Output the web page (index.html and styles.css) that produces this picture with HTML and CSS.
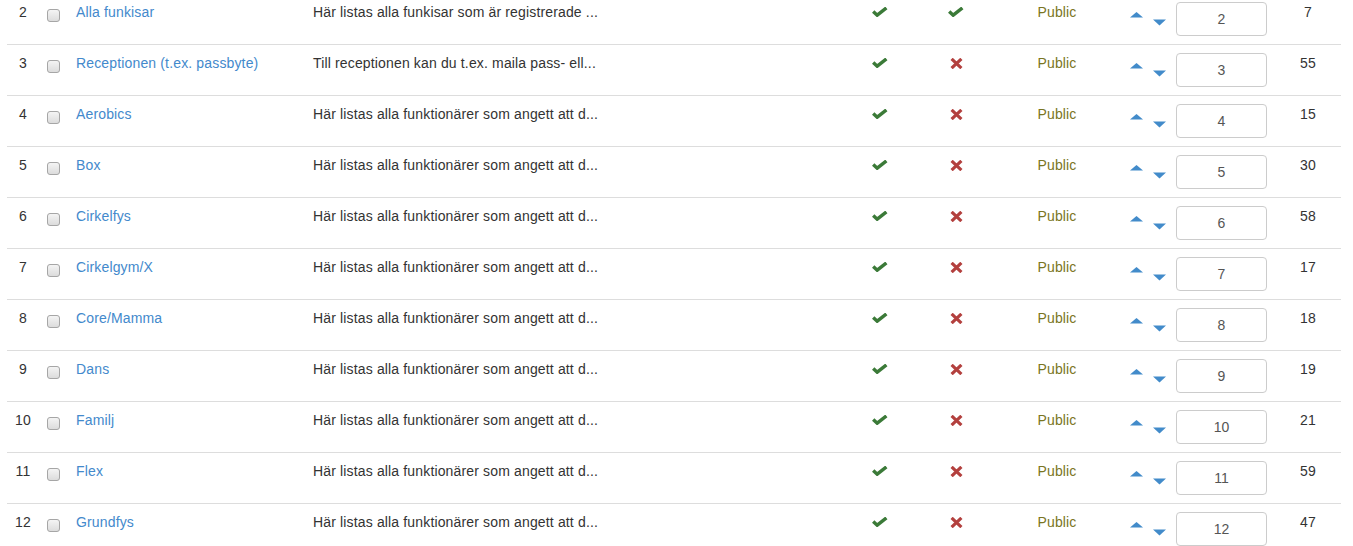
FILE: index.html
```html
<!DOCTYPE html>
<html lang="sv">
<head>
<meta charset="utf-8">
<title>Funktionärsgrupper</title>
<link rel="stylesheet" href="styles.css">
</head>
<body>
<table class="list">
  <colgroup>
    <col class="c-num"><col class="c-cb"><col class="c-title"><col class="c-desc">
    <col class="c-pub"><col class="c-flag"><col class="c-access"><col class="c-order"><col class="c-count">
  </colgroup>
  <tbody id="rows"></tbody>
</table>
<script src="app.js"></script>
</body>
</html>
```
FILE: app.js
```js
var data = [
  [2, "Alla funkisar", "Här listas alla funkisar som är registrerade ...", true, 7],
  [3, "Receptionen (t.ex. passbyte)", "Till receptionen kan du t.ex. maila pass- ell...", false, 55],
  [4, "Aerobics", "", false, 15],
  [5, "Box", "", false, 30],
  [6, "Cirkelfys", "", false, 58],
  [7, "Cirkelgym/X", "", false, 17],
  [8, "Core/Mamma", "", false, 18],
  [9, "Dans", "", false, 19],
  [10, "Familj", "", false, 21],
  [11, "Flex", "", false, 59],
  [12, "Grundfys", "", false, 47]
];
var defDesc = "Här listas alla funktionärer som angett att d...";
var check = '<svg class="ico-check" width="16" height="10" viewBox="0 0 16 10"><path d="M1.2 4.4 L5.2 8.2 L14.4 0.9" fill="none" stroke="#3b7a38" stroke-width="3.4"/></svg>';
var cross = '<svg class="ico-cross" width="13" height="11" viewBox="0 0 13 11"><path d="M1.6 0.9 L11.4 10.1 M11.4 0.9 L1.6 10.1" fill="none" stroke="#b3403e" stroke-width="3.2"/></svg>';
var up = '<svg class="ico-up" width="13" height="6" viewBox="0 0 13 6"><path d="M0 5.5 L6.5 0 L13 5.5 Z" fill="#428bca"/></svg>';
var down = '<svg class="ico-down" width="13" height="7" viewBox="0 0 13 7"><path d="M0 0.5 L13 0.5 L6.5 6.5 Z" fill="#428bca"/></svg>';
var html = "";
data.forEach(function (r) {
  html += '<tr>' +
    '<td class="num">' + r[0] + '</td>' +
    '<td><input type="checkbox" class="cb"></td>' +
    '<td><a href="#" class="title">' + r[1] + '</a></td>' +
    '<td class="desc">' + (r[2] || defDesc) + '</td>' +
    '<td class="mid">' + check + '</td>' +
    '<td class="mid">' + (r[3] ? check : cross) + '</td>' +
    '<td class="mid access">Public</td>' +
    '<td><div class="order">' + up + down + '<input type="text" class="ord-input" value="' + r[0] + '"></div></td>' +
    '<td class="mid">' + r[4] + '</td>' +
    '</tr>';
});
document.getElementById("rows").innerHTML = html;
```
FILE: styles.css
```css
html, body {
  margin: 0;
  padding: 0;
  background: #fff;
}
body {
  font-family: "Liberation Sans", Arial, Helvetica, sans-serif;
  font-size: 14px;
  line-height: 20px;
  color: #333;
  letter-spacing: 0.15px;
  overflow: hidden;
}
.list {
  table-layout: fixed;
  border-collapse: collapse;
  width: 1334px;
  margin: -7px 0 0 7px;
}
.c-num { width: 32px; }
.c-cb { width: 29px; }
.c-title { width: 237px; }
.c-desc { width: 535px; }
.c-pub { width: 80px; }
.c-flag { width: 72px; }
.c-access { width: 130px; }
.c-order { width: 153px; }
.c-count { width: 66px; }

.list td {
  padding: 8px;
  border-top: 1px solid #ddd;
  vertical-align: top;
  white-space: nowrap;
  overflow: hidden;
}
.list td.num { text-align: center; padding-left: 6px; padding-right: 6px; }
.list td.mid { text-align: center; }
.access { color: #7a7522; }
.title {
  color: #4389cc;
  text-decoration: none;
}
.cb {
  -webkit-appearance: none;
  appearance: none;
  display: block;
  width: 13px;
  height: 13px;
  margin: 7px 0 0 0;
  border: 1px solid #a6a6a6;
  border-radius: 3px;
  background: linear-gradient(#f4f4f4, #dcdcdc);
  box-sizing: border-box;
}
.ico-check, .ico-cross {
  display: block;
  margin: 5px auto 0;
}
.order {
  display: flex;
  align-items: flex-start;
}
.ico-up {
  display: block;
  margin-top: 10px;
  flex: none;
}
.ico-down {
  display: block;
  margin: 17px 0 0 10px;
  flex: none;
}
.ord-input {
  display: block;
  flex: none;
  box-sizing: border-box;
  width: 91px;
  height: 34px;
  margin-left: 10px;
  padding: 6px 12px;
  border: 1px solid #ccc;
  border-radius: 4px;
  font-family: "Liberation Sans", Arial, Helvetica, sans-serif;
  font-size: 14px;
  line-height: 20px;
  color: #555;
  text-align: center;
  background: #fff;
}
```
